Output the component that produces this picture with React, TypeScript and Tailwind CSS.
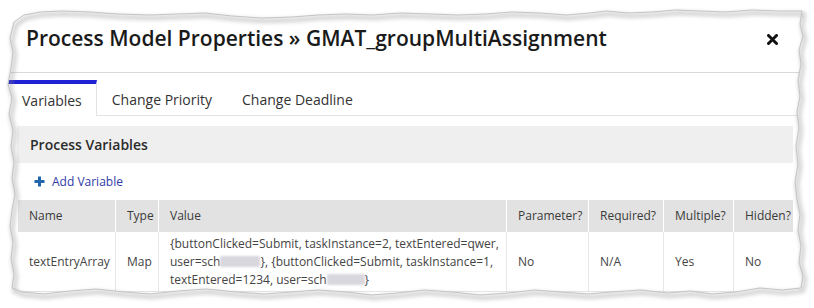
import React from "react";

const columns = [
  { label: "Name", w: "w-[97px]" },
  { label: "Type", w: "w-[43px]" },
  { label: "Value", w: "w-[348px]" },
  { label: "Parameter?", w: "w-[82px]" },
  { label: "Required?", w: "w-[75px]" },
  { label: "Multiple?", w: "w-[70px]" },
  { label: "Hidden?", w: "w-[61px]" },
];

// torn paper outline, drawn over the page so it cuts the panel edges
const paper =
  "M14,22 L24,15 L40,12 L62,11 L90,12 L118,14 L150,15 L178,14 L205,13 L232,16 L262,18 L292,17 L318,15 L346,14 L372,15 L400,13 L430,14 L458,15 L486,14 L512,12 L540,13 L566,15 L590,13 L606,11 L628,13 L652,12 L676,10 L700,11 L726,12 L752,10 L778,11 L802,11 " +
  "L800,24 L803,36 L799,50 L801,64 L798,80 L800,96 L797,112 L799,128 L796,146 L798,164 L795,182 L797,200 L800,214 L798,230 L801,246 L799,262 L803,276 L801,288 " +
  "L782,290 L760,288 L736,292 L712,294 L690,291 L668,293 L640,290 L612,292 L588,294 L560,292 L534,290 L508,293 L480,295 L452,292 L424,290 L398,293 L372,295 L346,292 L318,290 L292,292 L264,294 L236,292 L206,289 L178,291 L150,294 L124,292 L96,289 L70,291 L44,294 L22,292 L12,288 " +
  "L14,274 L11,258 L13,242 L10,226 L12,210 L15,194 L12,178 L14,162 L11,146 L13,130 L9,114 L12,98 L8,84 L11,68 L13,52 L10,38 Z";

function Redacted({ w }: { w: string }) {
  return (
    <span
      className={`inline-block ${w} h-[11px] align-[-1px] bg-[#d9d7de] blur-[1px] rounded-[1px]`}
    />
  );
}

export default function App() {
  return (
    <div className="relative w-[814px] h-[308px] overflow-hidden bg-white font-['Open_Sans',sans-serif] text-[#333]">
      <div className="ml-[8px] w-[798px]">
        <div className="h-[73px] flex items-center justify-between pt-[6px] pl-[18px] pr-[28px] border-b border-[#d9d9d9]">
          <h1 className="text-[21px] font-semibold text-[#1a1a1a]">
            Process Model Properties » GMAT_groupMultiAssignment
          </h1>
          <svg width="11" height="11" viewBox="0 0 11 11" className="mt-[1px]">
            <path d="M1.5 1.5 L9.5 9.5 M9.5 1.5 L1.5 9.5" stroke="#111" strokeWidth="3" strokeLinecap="round" />
          </svg>
        </div>

        <div className="h-[43px] flex items-end border-b border-[#e3e3e3] text-[14px]">
          <div className="h-[36px] -mb-px bg-white border-t-4 border-t-[#2020d4] border-r border-r-[#e3e3e3] px-[14px] flex items-center">
            Variables
          </div>
          <div className="h-[32px] px-[15px] flex items-center">Change Priority</div>
          <div className="h-[32px] px-[15px] flex items-center">Change Deadline</div>
        </div>

        <div className="ml-[9px] w-[776px] mt-[10px]">
          <div className="h-[37px] bg-[#efefef] pl-[13px] flex items-center text-[14px] font-semibold text-[#2b2b2b]">
            Process Variables
          </div>
          <div className="h-[37px] flex items-center pl-[17px] gap-[7px] text-[12px] text-[#2f3aa8]">
            <svg width="11" height="11" viewBox="0 0 11 11">
              <path d="M5.5 0.5 V10.5 M0.5 5.5 H10.5" stroke="#2166ac" strokeWidth="3" />
            </svg>
            Add Variable
          </div>

          <div className="ml-px text-[12px]">
            <div className="flex h-[32px] bg-[#e2e2e2] text-[#3a3a3a]">
              {columns.map((c, i) => (
                <div
                  key={c.label}
                  className={`${c.w} shrink-0 flex items-center pl-[11px] whitespace-nowrap ${i > 0 ? "border-l border-white" : ""}`}
                >
                  {c.label}
                </div>
              ))}
            </div>
            <div className="flex h-[60px] text-[#444] border-b border-[#e6e6e6]">
              <div className="w-[97px] shrink-0 flex items-center pl-[11px]">textEntryArray</div>
              <div className="w-[43px] shrink-0 flex items-center pl-[11px] border-l border-[#e6e6e6]">Map</div>
              <div className="w-[348px] shrink-0 flex items-center pl-[11px] border-l border-[#e6e6e6] leading-[18px] whitespace-nowrap">
                <div>
                  {"{buttonClicked=Submit, taskInstance=2, textEntered=qwer,"}
                  <br />
                  user=sch<Redacted w="w-[40px]" />
                  {"}, {buttonClicked=Submit, taskInstance=1,"}
                  <br />
                  textEntered=1234, user=sch<Redacted w="w-[38px]" />
                  {"}"}
                </div>
              </div>
              <div className="w-[82px] shrink-0 flex items-center pl-[11px] border-l border-[#e6e6e6]">No</div>
              <div className="w-[75px] shrink-0 flex items-center pl-[11px] border-l border-[#e6e6e6]">N/A</div>
              <div className="w-[70px] shrink-0 flex items-center pl-[11px] border-l border-[#e6e6e6]">Yes</div>
              <div className="w-[61px] shrink-0 flex items-center pl-[11px] border-l border-[#e6e6e6]">No</div>
            </div>
          </div>
        </div>
      </div>

      {/* torn-edge frame over the panel */}
      <svg className="absolute inset-0 pointer-events-none" width="814" height="308" viewBox="0 0 814 308">
        <defs>
          <filter id="shade" x="-5%" y="-5%" width="110%" height="110%">
            <feGaussianBlur stdDeviation="2.2" />
          </filter>
        </defs>
        <path d={`M0,0 H814 V308 H0 Z ${paper}`} fill="#fff" fillRule="evenodd" />
        <path d={paper} fill="none" stroke="#8a8a8a" strokeWidth="3" opacity="0.55" transform="translate(2,3)" filter="url(#shade)" />
        <path d={paper} fill="none" stroke="#c4c4c4" strokeWidth="1" />
      </svg>
    </div>
  );
}
